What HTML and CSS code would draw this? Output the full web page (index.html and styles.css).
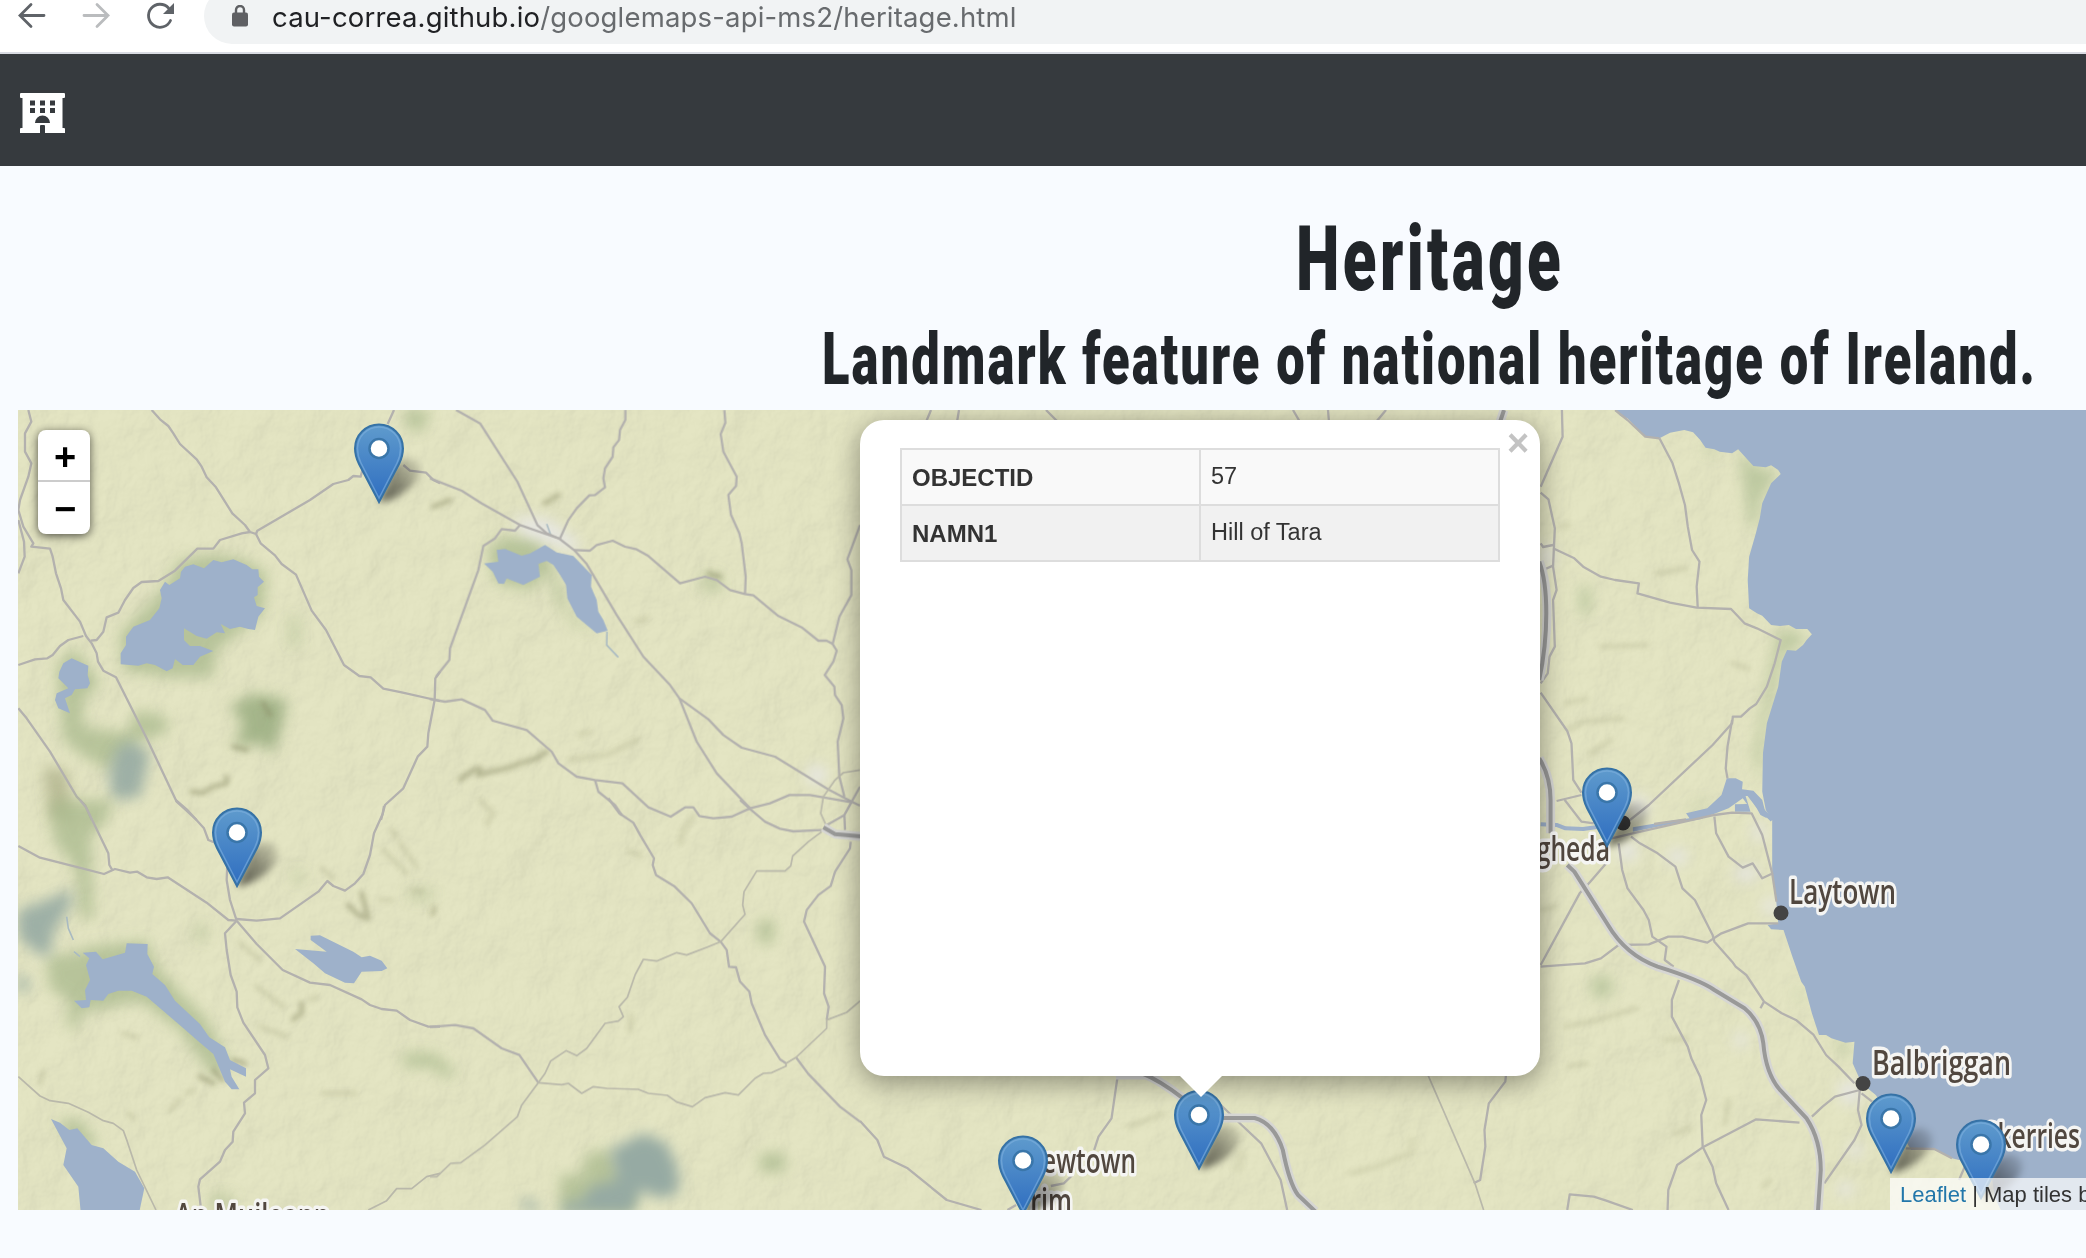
FILE: index.html
```html
<!DOCTYPE html>
<html lang="en">
<head>
<meta charset="utf-8">
<title>Heritage</title>
<link rel="stylesheet" href="styles.css">
</head>
<body>
<header class="toolbar">
  <svg class="tool" viewBox="0 0 28 28"><path d="M26 13.500H2.500M13 2.500L2 13.500L13 24.500"/></svg>
  <svg class="tool tool-off" viewBox="0 0 28 28"><path d="M2 13.500H26M15 2.500L26 13.500L15 24.500"/></svg>
  <svg class="tool" viewBox="0 0 28 28"><path d="M24.500 18.500A11.500 11.500 0 1 1 22.500 6"/><path class="solid" d="M28 1V12H17Z"/></svg>
  <div class="omnibox">
    <svg class="lock" viewBox="0 0 16 22"><rect y="7.500" width="16" height="14" rx="2"/><path d="M4 9V5a4 4 0 0 1 8 0V9"/></svg>
    <span class="url"><b>cau-correa.github.io</b>/googlemaps-api-ms2/heritage.html</span>
  </div>
</header>
<nav class="navbar">
  <a class="brand" aria-label="Home">
    <svg viewBox="0 0 45 40"><path fill-rule="evenodd" d="M1 0H44Q45 0 45 1V4Q45 5 44 5H42.500V35H44Q45 35 45 36V40H25V33Q25 32 24 32H21Q20 32 20 33V40H0V36Q0 35 1 35H2.500V5H1Q0 5 0 4V1Q0 0 1 0ZM10 7.500V12.500H15V7.500ZM20 7.500V12.500H25V7.500ZM30 7.500V12.500H35V7.500ZM10 15V20H15V15ZM20 15V20H25V15ZM30 15V20H35V15ZM15 30H30A7.500 7.500 0 0 0 15 30Z"/></svg>
  </a>
</nav>
<main class="page">
  <h1 class="title"><svg width="264" height="100" viewBox="0 0 264 100"><text x="-1" y="78" textLength="268" lengthAdjust="spacingAndGlyphs">Heritage</text></svg></h1>
  <h2 class="subtitle"><svg width="1212" height="90" viewBox="0 0 1212 90"><text x="-1" y="64" textLength="1215" lengthAdjust="spacingAndGlyphs">Landmark feature of national heritage of Ireland.</text></svg></h2>
  <section class="map">
    <svg class="tiles" viewBox="18 410 2068 800">
      <defs>
        <filter id="relief" x="0" y="0" width="100%" height="100%"><feTurbulence type="fractalNoise" baseFrequency=".022 .018" numOctaves="5" seed="8" result="n"/><feDiffuseLighting in="n" surfaceScale="7" lighting-color="#fff"><feDistantLight azimuth="225" elevation="60"/></feDiffuseLighting></filter>
        <filter id="soft" x="-60%" y="-60%" width="220%" height="220%"><feGaussianBlur stdDeviation="20"/></filter>
        <filter id="fine" x="-50%" y="-50%" width="200%" height="200%"><feGaussianBlur stdDeviation="8"/></filter>
        <linearGradient id="fade" x1="0" y1="1" x2="1" y2="0"><stop offset="0" stop-color="#000" stop-opacity=".6"/><stop offset=".5" stop-color="#000" stop-opacity=".38"/><stop offset="1" stop-color="#000" stop-opacity=".05"/></linearGradient>
        <filter id="cast" x="-50%" y="-50%" width="200%" height="200%"><feGaussianBlur stdDeviation="3.500"/></filter>
        <linearGradient id="blue" x1="0" y1="0" x2="0" y2="1"><stop offset="0" stop-color="#5f9bcd"/><stop offset="1" stop-color="#2e6dc0"/></linearGradient>
        <g id="pin">
          <path d="M0 0L14 -36Q26 -50 38 -42Q46 -32 34 -18Q20 -4 0 0Z" fill="url(#fade)" filter="url(#cast)"/>
          <path d="M0 -1L-20 -39Q-24 -47 -24 -54.500A24 24 0 0 1 24 -54.500Q24 -47 20 -39Z" fill="url(#blue)" stroke="#3672a6" stroke-width="2"/>
          <path d="M0 -5L-18 -40Q-21.500 -47 -21.500 -54.500A21.500 21.500 0 0 1 21.500 -54.500Q21.500 -47 18 -40Z" fill="none" stroke="#7fb0dd" stroke-width="1.500" opacity=".6"/>
          <circle cy="-54.500" r="9.500" fill="#fff" stroke="#3a76aa" stroke-width="2.500"/>
        </g>
      </defs>
      <rect x="18" y="410" width="2068" height="800" fill="#e4e5c3"/>
      <rect class="relief" x="18" y="410" width="2068" height="800" filter="url(#relief)"/>

      <!-- north-west tile -->
      <g transform="translate(0 400) scale(.33333)">
        <g fill="#a9b98d" filter="url(#soft)" opacity=".75">
          <path d="M1210 30H1290L1270 90H1225Z"/>
          <path d="M540 480Q700 440 800 520L790 640 650 750 640 830 500 830 370 810 360 700 480 580Z"/>
          <path d="M170 800L220 740 300 850 250 900 250 980 380 1000 410 930 500 950 500 1000 420 1020 330 1110 250 1070 190 1020Z"/>
          <path d="M690 920L760 880 860 900 850 960 820 1060 780 1030 700 1040 730 970Z" fill="#8fa577"/>
          <path d="M865 650H900V740H865Z" opacity=".6"/>
          <path d="M130 1100L200 1110 220 1260H150Z" fill="#acaf88"/>
        </g>
        <path d="M345 1050L390 1020 450 1060 420 1190 340 1200 325 1130Z" fill="#96aaa3" opacity=".9" filter="url(#soft)"/>
        <g class="ridge"><path d="M575 1175L610 1178 640 1160 680 1150V1130M790 910L810 945M700 1040L740 1050"/></g>
        <path class="water" d="M543 515L555 500 580 493 612 505 640 480 665 487 700 478 740 495 757 508 775 508 777 530 792 545 773 562 773 585 762 592 770 618 795 625 775 650 765 690 745 687 720 680 690 687 662 672 675 700 650 697 620 716 590 708 552 685 552 720 570 738 600 738 640 753 600 770 580 795 548 795 525 777 518 805 500 814 465 795 440 790 415 797 362 793 362 760 378 735 378 710 400 680 450 660 478 625 485 595 480 570 495 545 508 555 540 535Z"/>
        <path class="water" d="M215 775L238 785 265 797 263 825 270 850 262 865 225 868 215 885 195 895 210 940 175 925 165 900 170 880 205 865 175 835 178 815 190 790Z"/>
        <g class="road">
          <path d="M455 30L480 58 505 78 520 100 540 132 590 178 605 200 620 232 648 262 697 340 735 375 750 396 768 402 782 430 825 466 845 492 888 524 935 632 978 690 1032 795 1078 828 1112 832 1150 866 1205 877 1320 903"/>
          <path d="M55 795L105 778 142 775 158 765 180 738 205 720 250 708M768 402L772 392 930 300 1000 252 1045 240 1060 228 1082 230 1090 200 1120 195M1210 195L1230 212 1278 218 1300 240 1320 250"/>
          <path d="M750 396L725 400 660 420 640 446 592 446 525 512 475 543 425 546 400 564 375 600 355 638 320 652 310 695 290 720 272 722"/>
          <path d="M85 30L94 65 75 100 75 155 94 190 85 230 60 300 55 330 70 380 100 430 94 440 150 446 158 470 168 520 183 565 190 600 240 665 258 708 275 730 290 760 294 785 310 812 348 832 440 1015 530 1205 590 1260"/>
          <path d="M55 360L72 425 74 470 55 520M55 925L80 955 150 1055 230 1190 255 1215 275 1260M1320 815L1306 835 1304 900 1285 1000 1282 1040 1253 1070 1210 1165 1155 1215 1143 1260M1182 30L1163 72"/>
        </g>
      </g>

      <!-- north tile -->
      <g transform="translate(430 400) scale(.33333)">
        <g fill="#a9b98d" filter="url(#soft)" opacity=".75">
          <path d="M170 450L220 410 320 410 340 440 380 520 420 640 500 700 430 670 380 600 360 510 300 570 200 550Z"/>
          <path d="M800 560L830 520 880 530 870 580Z" opacity=".8"/>
        </g>
        <path d="M250 350L350 355 440 420 450 460 380 440 270 400Z" fill="#e6e6e2" filter="url(#soft)"/>
        <circle cx="1160" cy="1125" r="30" fill="#e6e6e2" filter="url(#soft)"/>
        <g class="ridge"><path d="M90 1138L130 1110 150 1105 145 1125 180 1115 230 1105 270 1090 320 1075 350 1055M345 310L385 285M10 320L60 300M835 520L870 530"/></g>
        <g class="ridge faint"><path d="M620 665L650 655M450 1005L480 995M600 1030L620 1020M420 1080L530 1065 600 1030"/></g>
        <path class="water" d="M162 490L205 485 200 450 225 447 275 467 300 460 345 435 380 457 430 468 485 525 483 560 500 600 505 635 520 660 533 692 500 700 440 650 412 595 408 555 390 525 370 495 350 483 325 492 330 530 280 555 230 535 222 552 205 550 188 515Z"/>
        <path class="stream" d="M531 695L530 735 565 772M350 372L362 405"/>
        <g class="road">
          <path d="M78 30L150 70 262 245 322 375 350 400 388 416"/>
          <path d="M0 235L95 272 155 310 270 375 388 416 432 450 470 492 560 645 640 770 720 855 748 895 835 958 880 1005 935 1043 1035 1070 1195 1168 1265 1205 1290 1217"/>
          <path d="M586 30L586 60 570 90 567 120 550 142 548 170 525 205 520 235 525 262 495 285 478 286 440 325 415 360 390 415"/>
          <path d="M270 375L255 392 215 387 195 415 160 438 145 510 60 745 58 780 18 830"/>
          <path d="M0 897L45 905 95 898 165 930 188 962 290 990 365 1055 385 1090 440 1130 495 1140 577 1150 655 1222 722 1250 765 1222 790 1222 808 1248 850 1255 905 1250 960 1225 1020 1210 1078 1185 1140 1185 1265 1207"/>
          <path d="M495 1140L505 1175 555 1215 575 1245"/>
          <path d="M432 450L480 452 500 435 548 422 585 440 620 448 655 468 750 550 825 530 860 540 900 570 945 582 970 586 1045 648 1115 682 1165 722 1190 722 1208 732"/>
          <path d="M883 30L886 68 872 102 880 155 920 230 918 258 895 285 903 345 928 400 935 430 947 530 945 582"/>
          <path d="M1290 375L1252 478 1264 510 1264 585 1228 650 1208 732 1220 752 1210 785 1184 825 1213 860 1215 885 1235 915 1240 955 1223 1025 1228 1130 1243 1190"/>
          <path d="M748 895L800 1025 860 1120 960 1225M1290 1160L1265 1205"/>
        </g>
        <path class="road thin" d="M1290 1110L1240 1118 1215 1140 1180 1190 1172 1240 1190 1280"/>
      </g>

      <!-- south-west tile -->
      <g transform="translate(0 800) scale(.33333)">
        <g fill="#a9b98d" filter="url(#soft)" opacity=".75">
          <path d="M150 0H340L320 60 270 110 280 360 240 350 230 210 160 120Z"/>
          <path d="M140 470L220 460 270 440 440 420 470 500 620 660 690 800 640 830 540 690 420 600 240 640 230 690 200 680 210 600 150 570Z"/>
          <path d="M170 960L240 960 300 1040 230 1040Z"/>
          <path d="M1210 760H1300L1340 790 1370 830H1330L1300 800H1210Z"/>
          <path d="M630 1180H700V1230H630ZM585 370L620 380V420H585ZM880 210H910V250H880ZM1225 270H1300V300H1225Z" opacity=".7"/>
        </g>
        <path d="M54 330L140 300 210 270 220 300 160 400 150 470 110 460 54 410ZM54 520L90 545 80 575H54Z" fill="#96aaa3" filter="url(#soft)" opacity=".9"/>
        <g class="ridge"><path d="M1045 315L1075 345 1105 355 1085 280M905 610L905 640 880 658M700 780L735 790M600 830L640 850M640 810L668 840"/></g>
        <g class="ridge faint"><path d="M1140 300L1175 300M1175 90L1190 110M510 930L540 900M560 880L580 870M970 880H1065M370 700L410 712M965 205L1000 235M1240 272L1265 272M1300 320V345M385 940L400 955M120 850L130 815M1200 130L1250 200M1150 150L1220 220M720 430L780 480M780 680L860 710M770 560L850 620M930 600L950 590"/></g>
        <path class="water" d="M380 430L443 432 442 462 462 500 457 522 495 555 525 602 600 672 628 712 675 742 690 780 738 805 738 830 690 808 695 830 718 868 695 868 675 845 640 762 600 728 545 680 440 590 395 572 355 572 325 582 310 602 272 600 268 622 245 625 222 602 258 600 255 570 270 540 258 495 268 475 248 458 288 455 308 478 375 458Z"/>
        <path class="water" d="M885 447L980 455 932 420 932 407 960 406 1060 455 1085 472 1110 467 1145 482 1162 505 1145 513 1085 515 1062 550 1035 548 975 520 940 490Z"/>
        <path class="water" d="M153 957L180 968 208 990 232 985 275 1035 310 1045 355 1085 405 1115 433 1165 418 1235 242 1235 235 1160 190 1095 200 1045Z"/>
        <path class="stream" d="M200 350L205 385 220 420M222 455L240 470"/>
        <g class="road">
          <path d="M55 138L120 173 238 203 312 222 345 207 390 218 412 215 440 232 470 237 503 232 620 308 685 360 710 362"/>
          <path d="M240 0L258 22 325 160 328 195 338 212M527 0L560 28 612 85 625 120 645 128M682 190L680 240 690 300 710 362"/>
          <path d="M710 357L770 362 840 355 955 275 982 243 1000 258 1035 272 1065 250 1090 222 1110 165 1122 100 1148 42 1152 18"/>
          <path d="M710 362L770 432 848 510 930 548 990 555 1085 598 1110 615 1145 627 1190 632 1230 660 1285 680 1320 680"/>
          <path d="M710 362L675 400 680 450 692 525 710 575 712 622 730 668 795 765 805 805 765 840 765 880 732 908 735 940 700 995 698 1025 675 1050 660 1085 600 1138 595 1160 604 1235"/>
        </g>
        <path class="road thin" d="M55 830L120 888 150 902 205 910 265 937 310 962 340 970 370 992 382 1025 410 1110 468 1230M1320 1120L1280 1130 1235 1166 1190 1166 1160 1202 1105 1230"/>
      </g>

      <!-- south tile -->
      <g transform="translate(430 800) scale(.33333)">
        <g fill="#a9b98d" filter="url(#soft)" opacity=".75">
          <path d="M390 1120L450 1130 470 1060 540 1050 620 1180 600 1235H390Z"/>
          <path d="M985 360H1030V430H985ZM990 1060H1065V1115H990Z"/>
        </g>
        <path d="M540 1050L640 1000 710 1030 745 1110 745 1180 690 1195 630 1170 610 1240H390L400 1210 460 1200 480 1160 560 1140ZM280 1190L340 1230H280Z" fill="#96aaa3" filter="url(#soft)"/>
        <g class="ridge faint"><path d="M750 130L760 90 790 50M170 70L190 40 150 0M600 690L605 650M5 340L15 325M600 155L630 165"/></g>
        <g class="road">
          <path d="M535 -5L568 40 610 68 632 108 672 175 668 195 678 225 732 258 785 310 840 400 872 425 890 450 897 500 918 502 930 545 958 575 965 610 1005 705 1050 778 1068 790"/>
          <path d="M930 0L960 27 1005 65 1050 86 1090 94 1175 90M0 681L75 675 130 685 215 745 268 765 325 848M1098 772L1135 822 1230 920 1290 965"/>
          <path d="M1190 660L1196 620 1182 580 1185 500 1122 365 1130 330 1165 285 1202 258 1215 215 1260 145 1262 125M1265 5L1243 45 1190 75M1243 45L1245 90"/>
        </g>
        <g class="road thin">
          <path d="M1175 95L1135 125 1088 168 1082 198 1065 213 980 213 942 275 938 315 945 343 872 425 830 442 770 465 740 458 680 483 640 478 615 525 592 592 567 620 580 650 565 663 525 670 470 745 440 767 408 752 362 783 345 820 325 848 275 915 262 950 165 1035 92 1088 62 1090 20 1130 0 1130"/>
          <path d="M325 848L395 854 415 850 455 880 490 860 530 865 625 868 655 880 712 886 740 906 787 920 825 893 885 878 925 885 975 835 1000 820 1025 818 1068 798 1068 790 1098 772 1190 685 1190 660 1250 637 1290 603"/>
        </g>
        <path class="casing" d="M1180 82L1215 102 1300 110"/><path class="motorway" d="M1180 82L1215 102 1300 110"/>
      </g>

      <!-- strip above and below the popup -->
      <path class="road" d="M931 410L926 422M959 410L957 422M1046 410L1058 422M1293 410L1300 422M1328 410L1329 422M1386 410L1376 422"/>
      <path class="casing" d="M1504 410L1500 422"/><path class="motorway" d="M1504 410L1500 422"/>
      <g transform="translate(860 1040) scale(.43367 .33333)">
        <g class="ridge faint"><path d="M1130 400L1180 385 1270 340 1275 300M700 220L620 260M870 390L880 340"/></g>
        <path class="road" d="M0 243L40 300 55 350 110 385 200 480 280 510M595 100L580 235 550 290 540 330M490 405L470 430 440 438M360 495L340 510M1490 100L1488 125 1450 190 1440 270 1442 320 1430 420 1415 430M820 180L880 255 925 310 970 420 985 510"/>
        <path class="road thin" d="M1308 100L1418 430 1438 510"/>
        <path class="casing" d="M590 105H660Q690 120 745 175M835 234H910Q955 250 975 330Q990 430 1010 465L1050 514"/>
        <path class="motorway" d="M650 100Q690 120 745 175M835 234H910Q955 250 975 330Q990 430 1010 465L1050 514"/>
      </g>

      <!-- east coast -->
      <g transform="translate(1530 400) scale(.35459 .33333)">
        <g fill="#b0c095" filter="url(#soft)" opacity=".75">
          <path d="M590 150L640 200 700 215 650 300 640 380 620 380Z"/>
          <path d="M480 130L540 155 510 165ZM700 690L780 700 750 750 720 750 700 840 660 1000 650 1150 630 1060 660 900ZM140 560H170V640H140ZM175 1730H230V1790H175ZM430 1240L480 1205 520 1210ZM850 1920L900 1935 900 1980ZM745 1750L765 1780V1830Z"/>
        </g>
        <g fill="#e6e6e2" filter="url(#soft)">
          <path d="M30 440H65V500H30ZM280 1180L335 1200 330 1250 280 1260ZM250 1330H300V1380H250ZM390 1350H440V1390H390ZM580 1400H640V1440H580ZM870 2050L930 2040 930 2110 880 2110ZM900 2230H935V2270H900ZM870 2350H910V2385H870ZM660 1500H700V1540H660ZM580 1900H610V1940H580ZM630 1270H660V1320H630Z"/>
        </g>
        <g class="ridge faint"><path d="M110 990L150 965 260 955M100 910L160 895M170 1060L230 1020M35 1530L70 1520M100 1880L190 1860 300 1825M200 740L330 735M570 790L615 805M90 380L110 375M380 1920L440 1915M410 2200L450 2185M560 2100L550 2170M660 2360L675 2340M360 520L440 505M110 2000L160 1990"/></g>
        <path class="water" d="M240 30L255 48 275 55 325 110 365 115 395 98 435 90 460 97 480 120 495 143 520 148 535 155 570 160 587 148 610 175 630 198 665 202 680 196 700 210 707 222 680 250 655 310 648 355 637 400 618 470 614 540 618 625 640 640 655 647 680 675 705 678 730 675 750 687 782 687 795 703 780 720 770 735 750 752 725 750 710 785 700 860 668 970 657 1060 655 1175 665 1230 683 1260 683 1420 695 1510 700 1570 670 1575 680 1588 715 1590 740 1670 765 1745 775 1760 795 1840 815 1905 835 1905 850 1915 890 1928 915 1925 910 1990 935 2050 975 2085 1030 2170 1075 2250 1140 2245 1190 2275 1230 2285 1260 2290 1300 2310 1310 2390 1330 2435 1580 2435 1580 30Z"/>
        <path class="water" d="M555 1135L580 1135 600 1145 598 1168 630 1172 655 1200 668 1255 650 1245 620 1188 608 1188 622 1235H578L578 1213 612 1212 600 1195 560 1225 480 1258 400 1272 290 1295V1282L400 1262 450 1255 440 1240 500 1225 540 1185Z"/>
        <path class="stream wide" d="M30 1273L75 1275 100 1285 150 1287 210 1278M683 1260L640 1215 615 1180"/>
        <g class="road">
          <path d="M240 30L275 60 325 110 365 115M90 30L92 110 30 260M30 278L52 298 70 385 65 500 75 570 65 600 70 740 55 770 50 820 30 850"/>
          <path d="M65 445L125 475 150 500 200 530 240 540 307 550 303 580 395 608 470 623 567 627 605 670 640 685 707 720 690 790 668 860 638 912 620 925 595 950 572 950 570 970 515 1035 335 1215 270 1270"/>
          <path d="M365 115L402 190 420 250 437 315 445 380 457 450 478 485 470 560 473 623M570 960L557 1040 552 1105 557 1135"/>
          <path d="M30 878L105 993 117 1030 122 1140 145 1178M75 1203L145 1185M98 1200L145 1265 180 1270M30 430L37 441 65 435M37 510L65 497"/>
          <path d="M230 1315L290 1300 520 1245 570 1238 625 1240 655 1305 683 1420 695 1505M350 1272L440 1258"/>
          <path d="M520 1250L525 1300 560 1370 600 1403 628 1390 655 1435 685 1420"/>
          <path d="M285 1310L310 1330 360 1360 410 1400 430 1465 465 1500 515 1605 520 1625 570 1685 580 1700 610 1725 660 1805 710 1840 750 1860 800 1905 835 1965 870 2000 915 2050M660 1805L650 1825"/>
          <path d="M250 1330L260 1410 275 1465 320 1530 335 1560 345 1610 385 1640 380 1680 405 1700"/>
          <path d="M30 1700L155 1690 200 1675 250 1635 335 1633 390 1610 430 1610 500 1628 540 1600 615 1570 700 1570M30 1695L140 1480 170 1445 215 1390"/>
          <path d="M420 1740L400 1800 400 1850 445 1940 455 1975 480 2030 497 2100 483 2145 487 2240 515 2300 525 2350 560 2430"/>
          <path d="M105 2430L112 2383 180 2390 215 2402 290 2430M388 2430L390 2370 415 2295 490 2240 638 2158 760 2168"/>
          <path d="M795 2150L825 2120 860 2090 930 2070L925 2130 935 2175 915 2220 830 2350M935 2080L965 2105M1230 2290L1210 2340"/>
          <path d="M1060 2245L1140 2247 1190 2275"/>
        </g>
        <path class="casing" d="M26 485Q48 540 48 640Q48 740 26 840M26 1075Q58 1130 58 1200V1300M105 1395L125 1415 220 1575Q270 1665 360 1700Q480 1740 520 1770L605 1825Q650 1865 658 1930Q665 2020 705 2070L780 2155Q820 2220 820 2310L812 2435"/>
        <path class="motorway" d="M26 485Q46 540 46 640Q46 740 26 840M26 1075Q58 1130 58 1200V1300M105 1395L125 1415 220 1575Q270 1665 360 1700Q480 1740 520 1770L605 1825Q650 1865 658 1930Q665 2020 705 2070L780 2155Q820 2220 820 2310L812 2435"/>
      </g>

      <g fill="#444"><circle cx="1623" cy="823" r="7.500"/><circle cx="1781" cy="913" r="7.500"/><circle cx="1863" cy="1083.500" r="7.500"/></g>
      <g class="places">
        <text x="1493" y="861" textLength="117" lengthAdjust="spacingAndGlyphs">Drogheda</text>
        <text x="1789" y="904" textLength="107" lengthAdjust="spacingAndGlyphs">Laytown</text>
        <text x="1872" y="1074.500" textLength="139" lengthAdjust="spacingAndGlyphs">Balbriggan</text>
        <text x="1984" y="1148" textLength="96" lengthAdjust="spacingAndGlyphs">Skerries</text>
        <text x="1023" y="1173" textLength="113" lengthAdjust="spacingAndGlyphs">Newtown</text>
        <text x="1016" y="1213" textLength="56" lengthAdjust="spacingAndGlyphs">Trim</text>
        <text x="175" y="1228" textLength="155" lengthAdjust="spacingAndGlyphs">An Muileann</text>
      </g>
      <use href="#pin" x="379" y="503"/>
      <use href="#pin" x="1607" y="847"/>
      <use href="#pin" x="237" y="887"/>
      <use href="#pin" x="1199" y="1169.500"/>
      <use href="#pin" x="1891" y="1173"/>
      <use href="#pin" x="1981" y="1199"/>
      <use href="#pin" x="1023" y="1215"/>
    </svg>

    <div class="zoom"><a>+</a><a>−</a></div>

    <div class="popup">
      <div class="popup-body">
        <table>
          <tr><th>OBJECTID</th><td>57</td></tr>
          <tr><th>NAMN1</th><td>Hill of Tara</td></tr>
        </table>
        <a class="close">×</a>
      </div>
      <div class="tip"></div>
    </div>

    <div class="credit"><a>Leaflet</a> | Map tiles by</div>
  </section>
</main>
</body>
</html>
```
FILE: styles.css
```css
* { box-sizing: border-box; }
body { margin: 0; height: 1258px; overflow: hidden; background: #f8fbff; font-family: "Liberation Sans", Arial, sans-serif; color: #212529; }

/* browser toolbar */
.toolbar { display: flex; align-items: flex-start; height: 54px; padding-left: 18px; background: #fff; border-bottom: 2px solid #d9dbe2; overflow: hidden; }
.tool { flex: none; width: 28px; height: 28px; margin: 2px 36px 0 0; fill: none; stroke: #5f6368; stroke-width: 2.8; stroke-linecap: round; }
.tool .solid { fill: #5f6368; stroke: none; }
.tool-off { stroke: #babcbe; }
.omnibox { display: flex; flex: 1; align-items: center; gap: 24px; height: 56px; margin: -12px 0 0 -6px; padding-left: 28px; background: #f1f3f4; border-radius: 28px 0 0 28px; }
.lock { width: 16px; height: 22px; fill: #5f6063; }
.lock path { fill: none; stroke: #5f6063; stroke-width: 2.4; }
.url { padding-top: 1px; font-family: Inter, sans-serif; font-size: 27.5px; letter-spacing: .17px; line-height: 34px; color: #686b6e; white-space: nowrap; }
.url b { font-weight: 400; color: #202124; }

/* site bar */
.navbar { display: flex; align-items: center; height: 112px; padding: 6px 20px 0; background: #363a3e; }
.brand { display: flex; }
.brand svg { width: 45px; height: 40px; fill: #fff; }

/* headings */
.page { display: flex; flex-direction: column; width: 2821px; margin-left: 18px; }
.title, .subtitle { display: flex; justify-content: center; margin: 0; height: 100px; font-size: 91px; }
.title { margin-top: 46px; letter-spacing: 5px; }
.subtitle { height: 90px; margin-top: 8px; font-size: 73px; letter-spacing: 3px; }
.title svg, .subtitle svg { overflow: visible; fill: #212529; font-family: Roboto, sans-serif; font-weight: 900; }

/* map */
.map { position: relative; width: 2068px; height: 800px; overflow: hidden; }
.tiles { display: block; width: 2068px; height: 800px; }
.relief { opacity: .17; mix-blend-mode: multiply; }
.water { fill: #9eb1ca; }
.road, .casing, .motorway, .ridge path, .stream { fill: none; stroke-linejoin: round; vector-effect: non-scaling-stroke; }
.road, .road path { stroke: #b3b1ae; stroke-width: 2.3; vector-effect: non-scaling-stroke; }
.thin, .thin path { stroke: #b9b8aa; stroke-width: 1.7; }
.casing { stroke: #d6d6d3; stroke-width: 9; }
.motorway { stroke: #999998; stroke-width: 4; }
.ridge { filter: url(#fine); opacity: .5; }
.ridge path { stroke: #8b8d67; stroke-width: 5; stroke-linecap: round; }
.faint { opacity: .2; }
.stream { stroke: #a9bac2; stroke-width: 1.6; }
.wide { stroke: #9eb1ca; stroke-width: 4; }
.places { font-family: "Open Sans", sans-serif; font-size: 35px; font-weight: 600; fill: #51473f; stroke: #f5f5f3; stroke-width: 7px; stroke-linejoin: round; paint-order: stroke; }

.zoom { position: absolute; left: 20px; top: 20px; width: 52px; border-radius: 8px; background: #fff; box-shadow: 0 2px 10px rgba(0, 0, 0, .65); }
.zoom a { display: block; height: 52px; font: bold 38px/55px "Liberation Sans", sans-serif; text-align: center; color: #000; padding-left: 2px; }
.zoom a:first-child { border-bottom: 2px solid #ccc; }

.popup { position: absolute; left: 842px; top: 10px; width: 680px; }
.popup-body { position: relative; height: 656px; padding: 28px 40px; border-radius: 24px; background: #fff; box-shadow: 0 6px 28px rgba(0, 0, 0, .4); }
.tip { width: 42px; height: 21px; margin: 0 auto; background: #fff; clip-path: polygon(0 0, 100% 0, 50% 100%); position: relative; left: 1px; }
.popup table { width: 600px; table-layout: fixed; border-collapse: collapse; font-size: 24px; line-height: 34px; color: #333; }
.popup th, .popup td { height: 56px; padding: 11px 10px 9px; border: 2px solid #ddd; text-align: left; background: #f9f9f9; }
.popup th { width: 299px; }
.popup td { padding: 9px 10px 11px; font-size: 23.500px; }
.popup tr:nth-child(2) > * { background: #f1f1f1; }
.close { position: absolute; right: 11px; top: 7px; width: 22px; font: bold 38px/32px "Liberation Sans", sans-serif; text-align: center; color: #c3c3c3; }

.credit { position: absolute; left: 1872px; bottom: 0; width: 260px; height: 32px; padding-left: 10px; font-size: 22px; line-height: 33px; background: rgba(255, 255, 255, .7); color: #333; white-space: nowrap; }
.credit a { color: #2277aa; }
```
